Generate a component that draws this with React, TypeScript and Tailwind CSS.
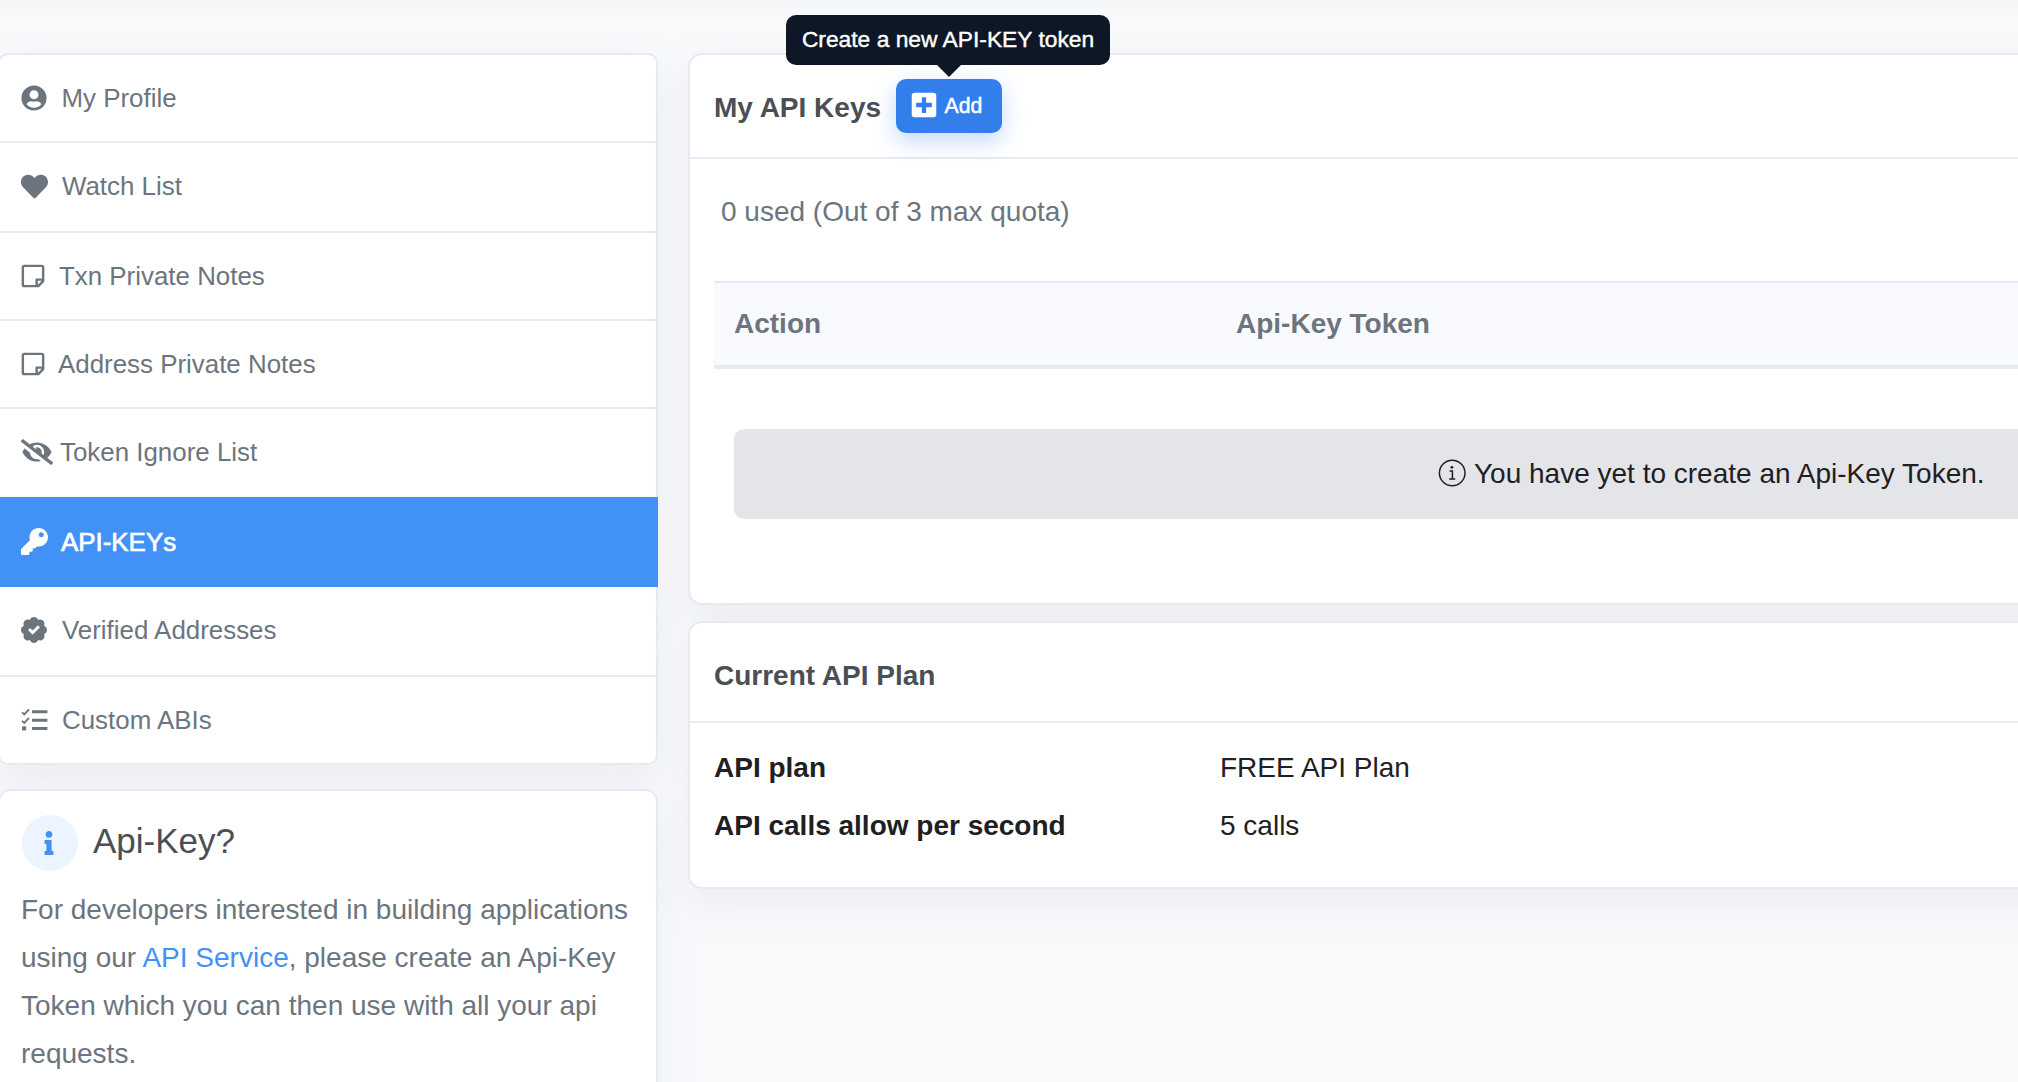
import React from "react";
import {
  FaUserCircle,
  FaHeart,
  FaRegStickyNote,
  FaEyeSlash,
  FaKey,
  FaInfo,
  FaPlusSquare,
} from "react-icons/fa";

const cardShadow = "shadow-[0_16px_38px_rgba(189,197,209,0.2)]";

function BadgeCheckIcon() {
  return (
    <svg width="26" height="26" viewBox="0 0 512 512" fill="currentColor">
      <path d="M512 256c0-37.7-23.7-69.9-57.1-82.4 14.7-32.4 8.8-71.9-17.9-98.6-26.7-26.7-66.2-32.6-98.6-17.9C325.9 23.7 293.7 0 256 0s-69.9 23.7-82.4 57.1c-32.4-14.7-72-8.8-98.6 17.9-26.7 26.7-32.6 66.2-17.9 98.6C23.7 186.1 0 218.3 0 256s23.7 69.9 57.1 82.4c-14.7 32.4-8.8 72 17.9 98.6 26.6 26.6 66.1 32.7 98.6 17.9 12.5 33.3 44.7 57.1 82.4 57.1s69.9-23.7 82.4-57.1c32.6 14.8 72 8.7 98.6-17.9 26.7-26.7 32.6-66.2 17.9-98.6 33.4-12.5 57.1-44.7 57.1-82.4zm-144.8-44.25L236.16 341.74c-4.31 4.28-11.28 4.25-15.55-.06l-75.72-76.33c-4.28-4.31-4.25-11.28.06-15.56l26.03-25.82c4.31-4.28 11.28-4.25 15.56.06l42.15 42.49 97.2-96.42c4.31-4.28 11.28-4.25 15.55.06l25.82 26.03c4.28 4.32 4.26 11.29-.06 15.56z" />
    </svg>
  );
}

function ChecklistIcon() {
  return (
    <svg width="27" height="24" viewBox="0 0 27 24" fill="none" stroke="currentColor">
      <path d="M1 4.4l2.3 2L8 1.4M1 12.9l2.3 2L8 9.9" strokeWidth="1.9" />
      <rect x="1" y="18.2" width="4.2" height="4.2" rx="1" fill="currentColor" stroke="none" />
      <path d="M11 3.8h15.4M11 12.2h15.4M11 20.4h15.4" strokeWidth="3" />
    </svg>
  );
}

function ThinInfoIcon() {
  return (
    <svg className="mb-[2px]" width="28" height="28" viewBox="0 0 28 28" fill="none" stroke="currentColor" strokeWidth="1.5">
      <circle cx="14.2" cy="14" r="12.8" />
      <circle cx="13.9" cy="8.3" r="1.4" fill="currentColor" stroke="none" />
      <path d="M11.6 12h2.8v7.6M11.2 19.9h6" />
    </svg>
  );
}

type NavItem = {
  label: string;
  icon: React.ReactNode;
  row: string;
  text: string;
};

const navItems: NavItem[] = [
  { label: "My Profile", icon: <FaUserCircle size={26} />, row: "h-[88px] border-b-2 pl-[21px]", text: "ml-[14.5px]" },
  { label: "Watch List", icon: <FaHeart size={27} />, row: "h-[90px] border-b-2 pb-[2px] pl-[21px]", text: "ml-[14px]" },
  { label: "Txn Private Notes", icon: <FaRegStickyNote size={26} />, row: "h-[88px] border-b-2 pl-[20px]", text: "ml-[13px]" },
  { label: "Address Private Notes", icon: <FaRegStickyNote size={26} />, row: "h-[88px] border-b-2 pl-[20px]", text: "ml-[12px]" },
  { label: "Token Ignore List", icon: <FaEyeSlash size={32} />, row: "h-[88px] pb-[2px] pl-[21px]", text: "ml-[7px]" },
  {
    label: "API-KEYs",
    icon: <FaKey size={27} className="mb-[2px]" />,
    row: "-mx-[2px] h-[90px] bg-[#4191f7] pl-[23px] text-white",
    text: "ml-[13px] [-webkit-text-stroke:0.7px]",
  },
  { label: "Verified Addresses", icon: <BadgeCheckIcon />, row: "h-[90px] border-b-2 pb-[2px] pl-[21px]", text: "ml-[15px]" },
  { label: "Custom ABIs", icon: <ChecklistIcon />, row: "h-[86px] pl-[21px]", text: "ml-[14px]" },
];

function Sidebar() {
  return (
    <aside className="-ml-[2px] flex w-[660px] shrink-0 flex-col gap-[24px]">
      <nav className={`shrink-0 rounded-[10px] border-2 border-[#e7eaf3] bg-white ${cardShadow}`}>
        {navItems.map((item) => (
          <a
            key={item.label}
            className={`flex items-center border-[#e7eaf3] text-[25.9px] leading-[40px] ${item.row}`}
          >
            {item.icon}
            <span className={item.text}>{item.label}</span>
          </a>
        ))}
      </nav>
      <section
        className={`h-[340px] shrink-0 rounded-[12px] border-2 border-[#e7eaf3] bg-white pt-[24px] pl-[21px] ${cardShadow}`}
      >
        <div className="ml-[1px] flex items-center">
          <span className="flex size-[56px] items-center justify-center rounded-full bg-[#ecf4ff] pr-[2px] text-[#4191f7]">
            <FaInfo size={24} />
          </span>
          <h2 className="ml-[15px] pb-[4px] text-[35px] leading-[52px] text-[#4a4f55]">Api-Key?</h2>
        </div>
        <p className="mt-[15px] w-[625px] text-[28px] leading-[48px]">
          For developers interested in building applications using our{" "}
          <a className="text-[#4191f7]">API Service</a>, please create an Api-Key Token which you can then use with all
          your api requests.
        </p>
      </section>
    </aside>
  );
}

function AddButton() {
  return (
    <div className="relative ml-[15px]">
      <button className="flex h-[54px] w-[106px] items-center rounded-[10px] bg-[#327fec] pb-[2px] pl-[14px] text-[21.2px] text-white shadow-[0_8px_22px_rgba(55,125,255,0.3)]">
        <FaPlusSquare size={28} />
        <span className="ml-[6.5px] pt-[2px] [-webkit-text-stroke:0.5px]">Add</span>
      </button>
      <div className="absolute -top-[64px] -left-[110px] flex h-[50px] w-[324px] items-center justify-center rounded-[10px] bg-[#0e1726] pb-[1px] text-[22.8px] whitespace-nowrap text-white [-webkit-text-stroke:0.4px]">
        Create a new API-KEY token
        <svg className="absolute top-[49px] left-[150px]" width="26" height="13" viewBox="0 0 26 13">
          <path d="M0 0h26L13 13z" fill="#0e1726" />
        </svg>
      </div>
    </div>
  );
}

function ApiKeysCard() {
  return (
    <section className={`h-[552px] rounded-[14px] border-2 border-[#e7eaf3] bg-white ${cardShadow}`}>
      <header className="flex h-[104px] items-center border-b-2 border-[#e7eaf3] pl-[24px]">
        <h1 className="pt-[3px] text-[28px] font-bold text-[#4a4f55]">My API Keys</h1>
        <AddButton />
      </header>
      <div className="pt-[29px] pl-[24px]">
        <p className="pl-[7px] text-[28px] leading-[48px]">0 used (Out of 3 max quota)</p>
        <div className="mt-[45px] flex h-[88px] items-center border-t-2 border-b-4 border-[#e7eaf3] bg-[#f8fafd] pl-[20px] text-[28px] font-bold">
          <div className="w-[502px]">Action</div>
          <div>Api-Key Token</div>
        </div>
        <div className="mt-[60px] ml-[20px] flex h-[90px] items-center rounded-l-[10px] bg-[#e4e5e9] pl-[704px] text-[28px] text-[#1e2022]">
          <ThinInfoIcon />
          <span className="ml-[8px] whitespace-nowrap">You have yet to create an Api-Key Token.</span>
        </div>
      </div>
    </section>
  );
}

const planRows = [
  ["API plan", "FREE API Plan"],
  ["API calls allow per second", "5 calls"],
];

function PlanCard() {
  return (
    <section className={`h-[268px] rounded-[14px] border-2 border-[#e7eaf3] bg-white ${cardShadow}`}>
      <header className="flex h-[100px] items-center border-b-2 border-[#e7eaf3] pt-[8px] pl-[24px]">
        <h2 className="text-[28px] font-bold text-[#4a4f55]">Current API Plan</h2>
      </header>
      <dl className="pt-[16px] pl-[24px] text-[28px] leading-[58px] text-[#1e2022]">
        {planRows.map(([name, value]) => (
          <div key={name} className="flex">
            <dt className="w-[506px] font-bold">{name}</dt>
            <dd>{value}</dd>
          </div>
        ))}
      </dl>
    </section>
  );
}

export default function App() {
  return (
    <div className="flex h-[1082px] w-[2018px] gap-[30px] overflow-hidden bg-[#f8f9fb] bg-linear-to-b from-[#f5f6f8] to-[#f8f9fb] to-[14px] pt-[53px] font-['Liberation_Sans',Arial,sans-serif] text-[#6c757e]">
      <Sidebar />
      <main className="-mr-[60px] flex flex-1 flex-col gap-[16px]">
        <ApiKeysCard />
        <PlanCard />
      </main>
    </div>
  );
}
